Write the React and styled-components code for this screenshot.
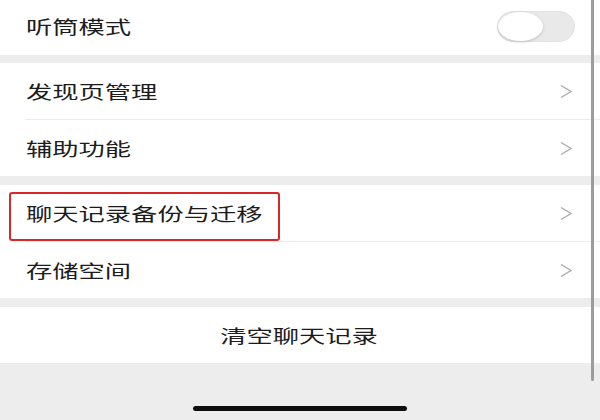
import styled, { createGlobalStyle } from 'styled-components';

const GlobalStyle = createGlobalStyle`
  html, body {
    margin: 0;
    padding: 0;
    background: #ededed;
  }
`;

const Page = styled.div`
  position: relative;
  width: 600px;
  height: 420px;
  overflow: hidden;
  background: #ededed;
  font-family: 'Noto Sans CJK SC', 'Noto Sans', sans-serif;
  color: #1c1c1c;
`;

const Group = styled.div`
  background: #fff;
  margin-bottom: ${(p) => p.gap || 9}px;
`;

const Row = styled.div`
  position: relative;
  display: flex;
  align-items: center;
  justify-content: ${(p) => (p.center ? 'center' : 'space-between')};
  height: ${(p) => p.h || 56}px;
  padding: 0 28px ${(p) => p.lift || 0}px 26px;
  box-sizing: border-box;

  & + & {
    height: ${(p) => (p.h || 56) + 1}px;
  }
  & + &::before {
    content: '';
    position: absolute;
    top: 0;
    left: 25px;
    right: 0;
    height: 1px;
    background: #ececec;
  }
  & + & > * {
    margin-top: 1px;
  }
`;

const Label = styled.span`
  display: inline-block;
  font-size: 18px;
  line-height: 1;
  white-space: nowrap;
  transform: scaleX(1.46);
  transform-origin: ${(p) => (p.center ? 'center' : 'left')} center;
`;

const Toggle = styled.div`
  position: relative;
  width: 78px;
  height: 31px;
  margin-right: -3px;
  border-radius: 16px;
  background: #e9e9e9;
  box-sizing: border-box;
  border: 1px solid #e2e2e2;
`;

const Knob = styled.div`
  position: absolute;
  left: 0;
  top: 0;
  width: 45px;
  height: 29px;
  border-radius: 50%;
  background: #fff;
  box-shadow: 0 1px 3px rgba(0, 0, 0, 0.18);
`;

const Highlight = styled.div`
  position: absolute;
  left: 9px;
  top: 7px;
  width: 271px;
  height: 49px;
  box-sizing: border-box;
  border: 2px solid #d8282a;
  border-radius: 3px;
  pointer-events: none;
`;

const Footer = styled.div`
  display: flex;
  justify-content: center;
  padding-top: 34px;
`;

const HomeBar = styled.div`
  width: 214px;
  height: 5px;
  border-radius: 3px;
  background: #0f0f0f;
`;

const ScrollBar = styled.div`
  position: absolute;
  top: 0;
  left: 591px;
  width: 3px;
  height: 381px;
  border-radius: 0 0 2px 2px;
  background: #9c9c9c;
`;

function Chevron() {
  return (
    <svg width="12" height="15" viewBox="0 0 12 15" fill="none">
      <path d="M1 1.5 L11 7.5 L1 13.5" stroke="#ababab" strokeWidth="1.4" />
    </svg>
  );
}

function NavRow({ label, highlight }) {
  return (
    <Row>
      {highlight && <Highlight />}
      <Label>{label}</Label>
      <Chevron />
    </Row>
  );
}

export default function App() {
  return (
    <Page>
      <GlobalStyle />
      <Group gap={8}>
        <Row h={55} lift={3}>
          <Label>听筒模式</Label>
          <Toggle>
            <Knob />
          </Toggle>
        </Row>
      </Group>
      <Group>
        <NavRow label="发现页管理" />
        <NavRow label="辅助功能" />
      </Group>
      <Group>
        <NavRow label="聊天记录备份与迁移" highlight />
        <NavRow label="存储空间" />
      </Group>
      <Group gap={0}>
        <Row center>
          <Label center>清空聊天记录</Label>
        </Row>
      </Group>
      <Footer>
        <HomeBar />
      </Footer>
      <ScrollBar />
    </Page>
  );
}
